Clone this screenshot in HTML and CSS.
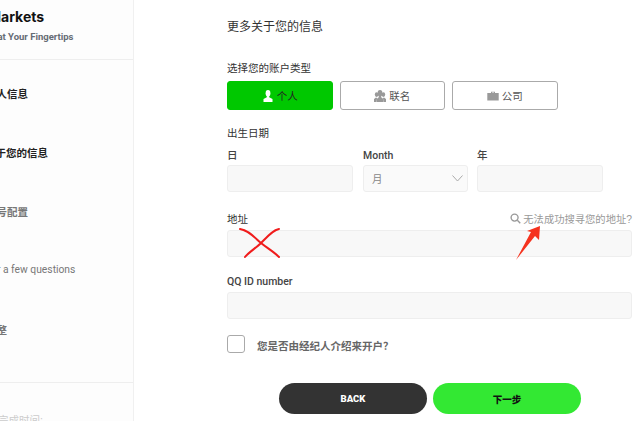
FILE: index.html
```html
<!DOCTYPE html>
<html lang="zh-CN">
<head>
    <meta charset="UTF-8">
    <meta name="viewport" content="width=device-width, initial-scale=1.0">
    <title>更多关于您的信息</title>
    <link rel="stylesheet" href="styles.css">
</head>
<body>
<div class="page">
    <aside class="sidebar">
        <div class="brand">
            <div class="brand-name">Markets</div>
            <div class="brand-tag">Markets at Your Fingertips</div>
        </div>
        <ul class="steps">
            <li class="step step-done">个人信息</li>
            <li class="step step-current">关于您的信息</li>
            <li class="step">账号配置</li>
            <li class="step step-latin">Answer a few questions</li>
            <li class="step">完整</li>
        </ul>
        <div class="sidebar-foot">预计完成时间:</div>
    </aside>

    <main class="content">
        <h1 class="title">更多关于您的信息</h1>

        <div class="label">选择您的账户类型</div>
        <div class="account-types">
            <button class="type-btn type-active">
                <svg class="type-icon" viewBox="0 0 12 12"><ellipse cx="6" cy="3.2" rx="2.4" ry="3.2"/><path d="M4.8 5.5h2.4v1.8L10.5 9v3h-9V9l3.3-1.7z"/></svg>
                个人
            </button>
            <button class="type-btn">
                <svg class="type-icon" viewBox="0 0 12 12"><ellipse cx="2.6" cy="4.6" rx="1.8" ry="2.3"/><ellipse cx="9.4" cy="4.6" rx="1.8" ry="2.3"/><path d="M0 12V9l2-1.5L3 8 2.5 12zM12 12V9l-2-1.5L9 8l.5 4z"/><ellipse cx="6" cy="3.2" rx="2.4" ry="3.2"/><path d="M4.8 5.5h2.4v1.8L9.3 9v3H2.7V9l2.1-1.7z"/></svg>
                联名
            </button>
            <button class="type-btn">
                <svg class="type-icon" viewBox="0 0 12 12"><path d="M4 3V1.8h4V3h3.7v7.5H.3V3zm1-.4V3h2v-.4z"/></svg>
                公司
            </button>
        </div>

        <div class="label birth-label">出生日期</div>
        <div class="birth-row">
            <div class="birth-col col-day">
                <label class="label-strong">日</label>
                <div class="input"></div>
            </div>
            <div class="birth-col col-month">
                <label class="label-strong">Month</label>
                <div class="input select">
                    <span>月</span>
                    <svg class="chevron" viewBox="0 0 11 7"><path d="M.5 .5l5 5.5 5-5.5"/></svg>
                </div>
            </div>
            <div class="birth-col col-year">
                <label class="label-strong">年</label>
                <div class="input"></div>
            </div>
        </div>

        <div class="address-head">
            <label class="label">地址</label>
            <span class="address-help">
                <svg class="search-icon" viewBox="0 0 12 12"><circle cx="5" cy="5" r="3.8"/><path d="M8 8l3.2 3.2"/></svg>
                无法成功搜寻您的地址?
            </span>
        </div>
        <div class="input"></div>

        <label class="label-strong qq-label">QQ ID number</label>
        <div class="input"></div>

        <div class="broker-row">
            <span class="checkbox"></span>
            <span class="broker-text">您是否由经纪人介绍来开户？</span>
        </div>

        <div class="actions">
            <button class="action action-back">BACK</button>
            <button class="action action-next">下一步</button>
        </div>
    </main>

    <!-- red marks drawn over the screenshot -->
    <svg class="marks" viewBox="0 0 638 421">
        <path class="mark-x" d="M240 229c8 1 14 8 21 14 6 5 12 8 18 14M279 229c-6 1-11 7-18 14-5 5-12 9-16 14"/>
        <path class="mark-arrow" d="M516 260L531 232L527 231L540 226L539 240L535 236z"/>
    </svg>
</div>
</body>
</html>
```

FILE: styles.css
```css
* {
    box-sizing: border-box;
}

body {
    margin: 0;
    background-color: #fff;
    font-family: "Liberation Sans", "Noto Sans CJK SC", sans-serif;
    color: #333;
}

.page {
    position: relative;
    display: flex;
    width: 638px;
    height: 421px;
    overflow: hidden;
}

/* sidebar, scrolled a little to the left */
.sidebar {
    flex: 0 0 134px;
    background-color: #fdfdfd;
    border-right: 1px solid #f0f0f0;
    overflow: hidden;
    white-space: nowrap;
}

.brand {
    height: 60px;
    padding-top: 8px;
    border-bottom: 1px solid #eee;
}

.brand-name {
    margin-left: -12px;
    font-family: "Inter", sans-serif;
    font-size: 14px;
    font-weight: 700;
    line-height: 18px;
    color: #111;
}

.brand-tag {
    margin-top: 4px;
    margin-left: -40px;
    font-family: "Roboto", sans-serif;
    font-size: 9.5px;
    font-weight: 700;
    line-height: 14px;
    color: #666c75;
}

.steps {
    list-style: none;
    margin: 0;
    padding: 0;
    height: 323px;
    border-bottom: 1px solid #eee;
}

.step {
    height: 59px;
    margin-left: -14px;
    padding-top: 27px;
    font-size: 10.5px;
    font-weight: 700;
    line-height: 14px;
    color: #777;
}

.step-done,
.step-current {
    color: #222;
}

.step-current {
    margin-left: -15px;
}

.step-latin {
    margin-left: -34px;
    padding-top: 26px;
    font-family: "Roboto", sans-serif;
    font-weight: 400;
    font-size: 10.3px;
}

.sidebar-foot {
    margin-top: 29px;
    margin-left: -23px;
    font-size: 10.5px;
    color: #ccc;
}

/* main form */
.content {
    flex: 0 0 405px;
    margin-left: 93px;
    padding-top: 19px;
}

.title {
    margin: 0;
    font-size: 12px;
    font-weight: 400;
    line-height: 16px;
    color: #333;
}

.label {
    font-size: 10.5px;
    line-height: 14px;
    color: #333;
}

.title + .label {
    margin-top: 26px;
}

.account-types {
    display: flex;
    gap: 7px;
    margin-top: 6px;
}

.type-btn {
    display: flex;
    align-items: center;
    justify-content: center;
    gap: 3px;
    width: 105.5px;
    height: 29px;
    padding: 0;
    background-color: #fff;
    border: 1px solid #aaa;
    border-radius: 3px;
    font-family: inherit;
    font-size: 10.5px;
    color: #555;
}

.type-active {
    background-color: #00c800;
    border-color: #00c800;
    color: #222;
}

.type-icon {
    width: 12px;
    height: 12px;
    fill: #999;
}

.type-active .type-icon {
    fill: #fff;
}

.birth-label {
    margin-top: 16px;
}

.birth-row {
    display: flex;
    margin-top: 9px;
}

.col-day {
    flex: 0 0 136px;
}

.col-month {
    flex: 0 0 114px;
}

.col-year {
    flex: 0 0 126px;
}

.col-day .input {
    width: 126px;
}

.col-month .input {
    width: 105px;
}

.label-strong {
    display: block;
    font-family: "Roboto", "Noto Sans CJK SC", sans-serif;
    font-size: 10.5px;
    font-weight: 500;
    line-height: 14px;
    color: #444;
}

.birth-col .label-strong {
    margin-bottom: 2px;
}

.input {
    height: 27px;
    background-color: #f8f8f8;
    border: 1px solid #eee;
    border-radius: 3px;
}

.select {
    display: flex;
    align-items: center;
    justify-content: space-between;
    padding: 0 4px 0 8px;
    background-color: #fafafa;
    font-size: 10.5px;
    color: #888;
}

.chevron {
    width: 11px;
    height: 7px;
    fill: none;
    stroke: #aaa;
    stroke-width: 1;
}

.address-head {
    display: flex;
    align-items: center;
    justify-content: space-between;
    margin-top: 19px;
    margin-bottom: 4px;
}

.address-help {
    display: flex;
    align-items: center;
    gap: 2px;
    font-size: 10.3px;
    color: #999;
}

.search-icon {
    width: 11px;
    height: 11px;
    fill: none;
    stroke: #999;
    stroke-width: 1.5;
}

.qq-label {
    margin-top: 18px;
    margin-bottom: 3px;
}

.broker-row {
    display: flex;
    align-items: center;
    gap: 12px;
    margin-top: 16px;
}

.checkbox {
    width: 18px;
    height: 18px;
    background-color: #fff;
    border: 1px solid #aaa;
    border-radius: 3px;
}

.broker-text {
    margin-top: 2px;
    font-size: 10.5px;
    font-weight: 700;
    color: #666;
}

.actions {
    display: flex;
    gap: 6px;
    margin-top: 30px;
    margin-left: 52px;
}

.action {
    width: 148px;
    height: 31px;
    padding: 0;
    border: none;
    border-radius: 16px;
    font-family: "Roboto", "Noto Sans CJK SC", sans-serif;
    font-size: 9.5px;
    font-weight: 900;
}

.action-back {
    background-color: #333;
    color: #fff;
}

.action-next {
    background-color: #33e833;
    color: #111;
}

.marks {
    position: absolute;
    top: 0;
    left: 0;
    width: 638px;
    height: 421px;
    pointer-events: none;
}

.mark-x {
    fill: none;
    stroke: #f01c1c;
    stroke-width: 2;
    stroke-linecap: round;
}

.mark-arrow {
    fill: #f5321e;
}
```
